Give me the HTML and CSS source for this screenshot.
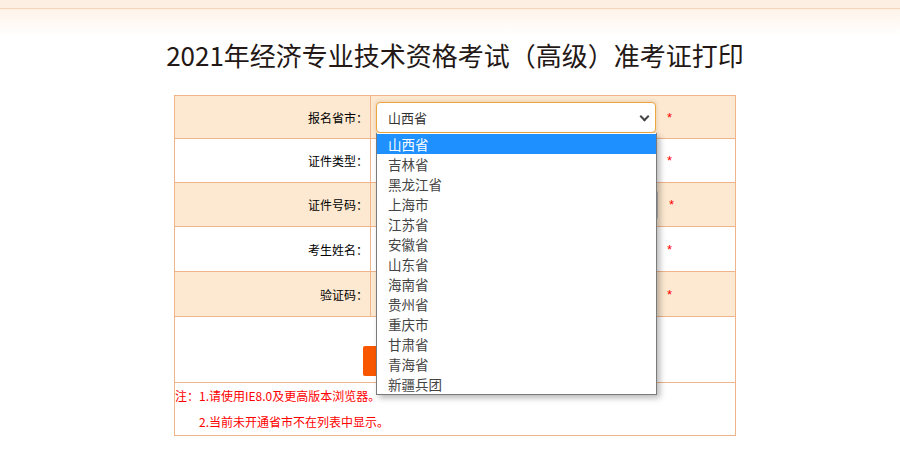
FILE: index.html
```html
<!DOCTYPE html>
<html>
<head>
	<meta charset="utf-8">
	<link rel="stylesheet" href="styles.css">
</head>
<body>
<div class="topbar"></div>
<h1 class="title">2021年经济专业技术资格考试（高级）准考证打印</h1>

<div class="wrap">
	<table class="form">
		<tr class="shade r43">
			<td class="label">报名省市：</td>
			<td class="field">
				<div class="picker">
					<div class="select focus">山西省<span class="arrow"></span></div>
					<ul class="options">
						<li class="on">山西省</li>
						<li>吉林省</li>
						<li>黑龙江省</li>
						<li>上海市</li>
						<li>江苏省</li>
						<li>安徽省</li>
						<li>山东省</li>
						<li>海南省</li>
						<li>贵州省</li>
						<li>重庆市</li>
						<li>甘肃省</li>
						<li>青海省</li>
						<li>新疆兵团</li>
					</ul>
				</div><span class="req">*</span>
			</td>
		</tr>
		<tr class="r44">
			<td class="label">证件类型：</td>
			<td class="field"><div class="select"><span class="arrow"></span></div><span class="req">*</span></td>
		</tr>
		<tr class="shade r44">
			<td class="label">证件号码：</td>
			<td class="field"><input class="text wide" type="text"><span class="req">*</span></td>
		</tr>
		<tr class="r45">
			<td class="label">考生姓名：</td>
			<td class="field"><input class="text" type="text"><span class="req">*</span></td>
		</tr>
		<tr class="shade r45">
			<td class="label">验证码：</td>
			<td class="field"><input class="text" type="text"><span class="req">*</span></td>
		</tr>
		<tr>
			<td class="btnrow" colspan="2"><button class="submit"></button></td>
		</tr>
		<tr>
			<td class="notes" colspan="2">
				<div>注：1.请使用IE8.0及更高版本浏览器。</div>
				<div class="indent">2.当前未开通省市不在列表中显示。</div>
			</td>
		</tr>
	</table>
</div>
</body>
</html>
```

FILE: styles.css
```css
body {
  margin: 0;
  background: #fff;
  font-family: "Noto Sans CJK SC", "Noto Sans", sans-serif;
}

.topbar {
  height: 36px;
  background: linear-gradient(to bottom, #fdf0e3 0, #fdf0e3 8px, #f5d5b6 8px, #f5d5b6 9px, #fef3e9 9px, #ffffff 36px);
}

.title {
  margin: 0 0 21px 0;
  padding-left: 10px;
  height: 38px;
  line-height: 38px;
  text-align: center;
  font-size: 26px;
  font-weight: normal;
  color: #231815;
}

.wrap {
  width: 562px;
  margin-left: 174px;
}

.form {
  width: 562px;
  table-layout: fixed;
  border-collapse: collapse;
  font-size: 12px;
}

.form td {
  border: 1px solid #efb48a;
  padding: 0;
}

.shade td {
  background: #fde9d1;
}

.r43 td { height: 42px; }
.r44 td { height: 43px; }
.r45 td { height: 44px; }

.label {
  width: 193px;
  text-align: right;
  padding-right: 2px !important;
  color: #000;
}

.field {
  padding-left: 5px !important;
  white-space: nowrap;
}

.picker {
  position: relative;
  display: inline-block;
  vertical-align: middle;
}

.select {
  position: relative;
  display: inline-block;
  vertical-align: middle;
  box-sizing: border-box;
  width: 280px;
  height: 31px;
  line-height: 29px;
  padding-left: 11px;
  border: 1px solid #b9b9b9;
  border-radius: 4px;
  background: #fff;
  font-size: 13px;
  color: #333;
}

.select.focus {
  border-color: #f0a640;
  box-shadow: 0 0 4px rgba(160, 120, 80, 0.35);
}

.arrow {
  position: absolute;
  right: 7px;
  top: 10px;
  width: 5px;
  height: 5px;
  border-right: 2px solid #444;
  border-bottom: 2px solid #444;
  transform: rotate(45deg);
}

.options {
  position: absolute;
  left: 0;
  top: 31px;
  z-index: 5;
  box-sizing: border-box;
  width: 281px;
  margin: 0;
  padding: 1px 0 0 0;
  list-style: none;
  background: #fff;
  border: 1px solid #7a7a7a;
  border-top: 0;
  box-shadow: 3px 3px 6px rgba(0, 0, 0, 0.28);
}

.options li {
  height: 20px;
  line-height: 20px;
  padding-left: 11px;
  font-size: 13.5px;
  color: #444;
  overflow: hidden;
}

.options li.on {
  background: #1e90ff;
  color: #fff;
}

.text {
  box-sizing: border-box;
  width: 280px;
  height: 30px;
  margin: 0;
  vertical-align: middle;
  border: 1px solid #b9b9b9;
  border-radius: 3px;
  background: #fff;
}

.text.wide {
  width: 282px;
}

.req {
  display: inline-block;
  vertical-align: middle;
  margin-left: 11px;
  color: #f00;
  font-size: 13px;
  font-family: "Liberation Sans", sans-serif;
}

.btnrow {
  height: 59px;
  text-align: center;
  vertical-align: bottom;
  padding-bottom: 6px !important;
  padding-left: 1px !important;
}

.submit {
  width: 186px;
  height: 30px;
  border: 0;
  border-radius: 2px;
  background: #f95600;
  vertical-align: bottom;
}

.notes {
  height: 52px;
  line-height: 26px;
  font-size: 12px;
  color: #f00;
  vertical-align: top;
}

.indent {
  padding-left: 24px;
}
```
